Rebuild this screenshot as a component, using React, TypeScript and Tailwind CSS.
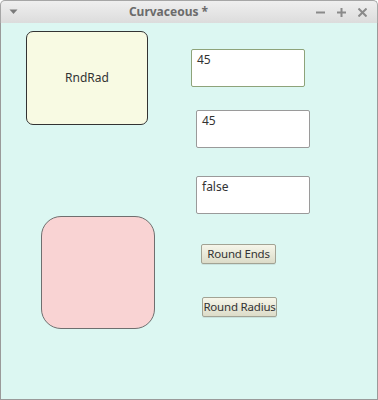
import React from "react";

const font = { fontFamily: '"Noto Sans", "Open Sans", sans-serif' };

const TitleBar: React.FC = () => (
    <div className="h-[23px] flex items-center rounded-t-[5px] border border-b-0 border-[#a6a6a6] bg-gradient-to-b from-[#efefef] to-[#dcdcdc]">
        <div className="w-[25px] flex justify-center">
            <svg width="9" height="6" viewBox="0 0 9 6">
                <path d="M0.5 0.5 L8.5 0.5 L4.5 5 Z" fill="#7a7a7a" />
            </svg>
        </div>
        <div className="flex-1 text-center text-[12px] font-bold text-[#6b6b6b]">Curvaceous *</div>
        <div className="w-[66px] flex items-center gap-[12px] pl-[5px]">
            <svg width="9" height="9" viewBox="0 0 9 9">
                <path d="M0 4.5 H9" stroke="#8a8a8a" strokeWidth="2" />
            </svg>
            <svg width="9" height="9" viewBox="0 0 9 9">
                <path d="M0 4.5 H9 M4.5 0 V9" stroke="#8a8a8a" strokeWidth="2" />
            </svg>
            <svg width="9" height="9" viewBox="0 0 9 9">
                <path d="M0.5 0.5 L8.5 8.5 M8.5 0.5 L0.5 8.5" stroke="#8a8a8a" strokeWidth="2" />
            </svg>
        </div>
    </div>
);

const Field: React.FC<{ value: string; focused?: boolean; className?: string }> = ({ value, focused, className }) => (
    <div
        className={`w-[114px] h-[38px] bg-white rounded-[2px] px-[5px] pt-[2px] text-[12px] leading-[16px] text-[#333] ${
            focused ? "border-[1.5px] border-[#8ea37a]" : "border border-[#9a9a9a]"
        } ${className ?? ""}`}
    >
        {value}
    </div>
);

const Btn: React.FC<{ label: string; className?: string }> = ({ label, className }) => (
    <button
        className={`w-[75px] h-[20px] flex items-center justify-center whitespace-nowrap rounded-[2px] border border-[#a2a394] bg-gradient-to-b from-[#f6f6ea] to-[#dcdcc9] text-[11.5px] tracking-[-0.2px] text-[#333] shadow-[0_1px_0_rgba(0,0,0,0.08)] ${className ?? ""}`}
    >
        {label}
    </button>
);

export default function App() {
    return (
        <div className="w-[378px] h-[400px] flex flex-col" style={font}>
            <TitleBar />
            <div className="flex-1 flex bg-[#dcf7f2] border border-t-0 border-[#9a9a9a]">
                {/* Left column */}
                <div className="flex flex-col ml-[25px]">
                    <div className="mt-[8px] w-[122px] h-[94px] rounded-[7px] border border-[#333] bg-[#f8fae3] flex items-center justify-center text-[12px] text-[#333]">
                        RndRad
                    </div>
                    <div className="mt-[91px] ml-[15px] w-[114px] h-[113px] rounded-[20px] border-[1.5px] border-[#6f6f6f] bg-[#f9d3d3]" />
                </div>

                {/* Right column */}
                <div className="flex flex-col ml-[36px]">
                    <Field value="45" focused className="mt-[26px] h-[37px]" />
                    <Field value="45" className="mt-[23px] ml-[5px]" />
                    <Field value="false" className="mt-[28px] ml-[5px] h-[37px]" />
                    <Btn label="Round Ends" className="mt-[30px] ml-[10px] h-[19px]" />
                    <Btn label="Round Radius" className="mt-[33px] ml-[11px]" />
                </div>
            </div>
        </div>
    );
}
